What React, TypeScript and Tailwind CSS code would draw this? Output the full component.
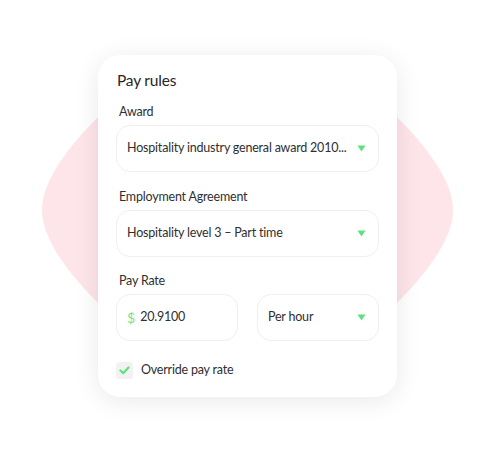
import React from "react";

function Caret() {
  return (
    <svg width="9" height="7" viewBox="0 0 9 7" className="shrink-0">
      <path d="M0.5 0.5 H8.5 L4.5 6.5 Z" fill="#5be37f" />
    </svg>
  );
}

function SelectBox({ value }: { value: string }) {
  return (
    <div className="flex items-center justify-between h-[47px] rounded-[14px] border border-[#efefef] bg-white pl-[10px] pr-[12px]">
      <span className="text-[12.5px] tracking-[-0.2px] text-[#2f2f2f] whitespace-nowrap">{value}</span>
      <Caret />
    </div>
  );
}

function Label({ children }: { children: React.ReactNode }) {
  return (
    <div className="text-[12.5px] leading-[18px] tracking-[-0.2px] text-[#2f2f2f] pl-[3px] mb-[4px]">{children}</div>
  );
}

export default function App() {
  return (
    <div
      className="relative w-[495px] h-[468px] bg-white overflow-hidden"
      style={{ fontFamily: "Lato, 'Noto Sans', sans-serif" }}
    >
      <svg className="absolute inset-0" width="495" height="468" viewBox="0 0 495 468">
        <path
          d="M100 115 C70 145 42 180 42 210 C42 240 70 275 100 305 L395 305 C425 275 453 240 453 210 C453 180 425 145 395 115 Z"
          fill="#fde5e9"
        />
      </svg>

      <div className="relative ml-[98px] mt-[55px] w-[299px] rounded-[22px] bg-white shadow-[0_4px_26px_rgba(0,0,0,0.09)] px-[18px] pt-[13px] pb-[17px]">
        <div className="text-[15.5px] leading-[24px] tracking-[-0.2px] text-[#262626] pl-[1px]">Pay rules</div>

        <div className="mt-[11px]">
          <Label>Award</Label>
          <SelectBox value="Hospitality industry general award 2010..." />
        </div>

        <div className="mt-[16px]">
          <Label>Employment Agreement</Label>
          <SelectBox value="Hospitality level 3 – Part time" />
        </div>

        <div className="mt-[15px]">
          <Label>Pay Rate</Label>
          <div className="flex gap-[19px]">
            <div className="flex items-center gap-[5px] w-[122px] h-[47px] rounded-[14px] border border-[#efefef] pl-[10px]">
              <span className="text-[14px] text-[#6ee48e]">$</span>
              <span className="text-[12.5px] tracking-[-0.2px] text-[#2f2f2f]">20.9100</span>
            </div>
            <div className="flex-1">
              <SelectBox value="Per hour" />
            </div>
          </div>
        </div>

        <div className="mt-[20px] flex items-center gap-[8px]">
          <div className="flex items-center justify-center w-[17px] h-[17px] rounded-[3px] bg-[#f2f2f2]">
            <svg width="11" height="9" viewBox="0 0 11 9">
              <path d="M1.5 4.5 L4.2 7.2 L9.5 1.5" fill="none" stroke="#5be37f" strokeWidth="2.2" strokeLinecap="round" strokeLinejoin="round" />
            </svg>
          </div>
          <span className="text-[12.5px] tracking-[-0.2px] text-[#2f2f2f]">Override pay rate</span>
        </div>
      </div>
    </div>
  );
}
